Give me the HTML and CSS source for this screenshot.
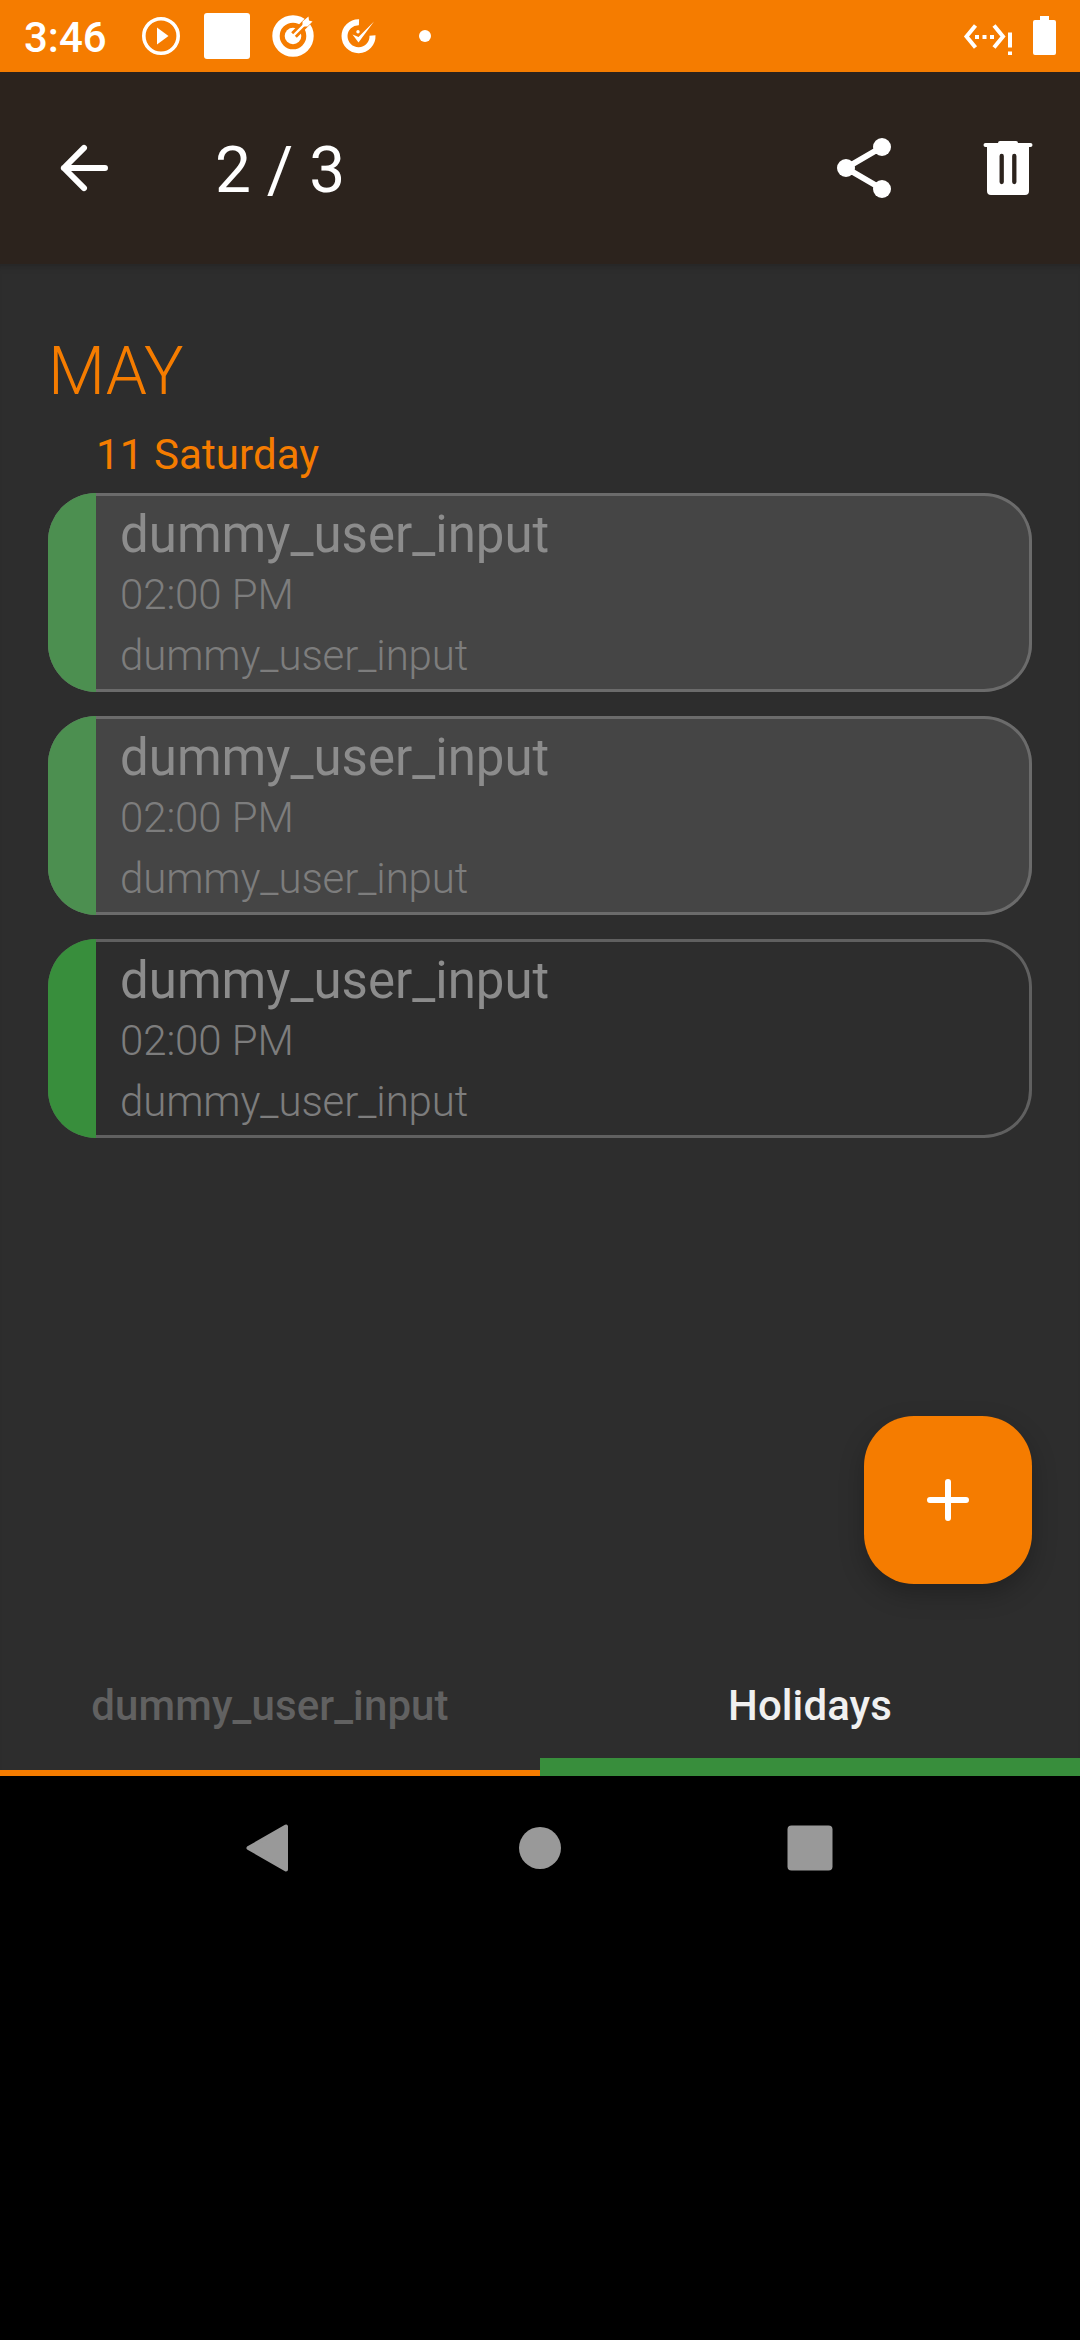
FILE: index.html
```html
<!DOCTYPE html>
<html lang="en">
<head>
<meta charset="utf-8">
<title>Holidays</title>
<link rel="stylesheet" href="styles.css">
</head>
<body>
<div class="screen">
  <header class="status">
    <span class="clock">3:46</span>
    <svg class="status-icons" width="306" height="72" viewBox="134 0 306 72">
      <circle cx="161" cy="36" r="17.2" fill="none" stroke="#fff" stroke-width="3.6"/>
      <path d="M157 27.5v17L168.500 36z" fill="#fff"/>
      <rect x="204" y="13" width="46" height="46" rx="3" fill="#fff"/>
      <circle cx="293" cy="36" r="17" fill="none" stroke="#fff" stroke-width="7.4"/>
      <circle cx="293" cy="36" r="8.300" fill="#fff"/>
      <path d="M294 35L308 21" stroke="#f57c00" stroke-width="8"/>
      <path d="M293 36L305 24" stroke="#fff" stroke-width="2.400"/>
      <path d="M302.500 26.500V21.500L308.500 16.500L309 20.500L312.500 21.500L307.500 26.500z" fill="#fff"/>
      <path d="M359 22.200A14 14 0 1 0 372.500 35.500" fill="none" stroke="#fff" stroke-width="6"/>
      <path d="M352.500 34.500L358.500 42.500L374 21.500L358.500 37z" fill="#fff"/>
      <circle cx="358" cy="31.800" r="1.700" fill="#fff"/>
      <circle cx="425" cy="36" r="6" fill="#fff"/>
    </svg>
    <svg class="system-icons" width="110" height="72" viewBox="954 0 110 72">
      <path d="M975.500 25.500L966.500 36.500L975.500 47.500M994 25.500L1003 36.500L994 47.500" fill="none" stroke="#fff" stroke-width="4"/>
      <path d="M975 35h4v4h-4zM982.500 35h4v4h-4zM990 35h4v4h-4zM1008 32.500h4v15h-4zM1008 51.500h4v3.500h-4z" fill="#fff"/>
      <path d="M1040 16h9v4h5a2 2 0 0 1 2 2v31a2 2 0 0 1-2 2h-19a2 2 0 0 1-2-2v-31a2 2 0 0 1 2-2h5z" fill="#fff"/>
    </svg>
  </header>
  <div class="toolbar">
    <svg width="72" height="72" viewBox="0 0 24 24" fill="none" stroke="#fff" stroke-width="2" stroke-linecap="round" stroke-linejoin="round"><path d="M19 12H5.300M12 5.300L5.300 12L12 18.700"/></svg>
    <h1 class="counter">2 / 3</h1>
    <svg class="share" width="72" height="72" viewBox="0 0 24 24" fill="#fff"><path d="M18 5L6 12L18 19" fill="none" stroke="#fff" stroke-width="2"/><circle cx="18" cy="5" r="3"/><circle cx="6" cy="12" r="3"/><circle cx="18" cy="19" r="3"/></svg>
    <svg width="72" height="72" viewBox="972 132 72 72"><path d="M1000 141h16q2 0 2 2h12.500a2 2 0 0 1 0 4H1029v44a4 4 0 0 1-4 4h-34a4 4 0 0 1-4-4v-44h-1.500a2 2 0 0 1 0-4H998q0-2 2-2z" fill="#fff"/><path d="M1001.700 156v26M1014.300 156v26" stroke="#2c231d" stroke-width="4.300" stroke-linecap="round"/></svg>
  </div>
  <main class="content">
    <h2 class="month">MAY</h2>
    <h3 class="day">11 Saturday</h3>
    <div class="events">
      <article class="event selected"><div class="title">dummy_user_input</div><div class="line">02:00 PM</div><div class="line">dummy_user_input</div></article>
      <article class="event selected"><div class="title">dummy_user_input</div><div class="line">02:00 PM</div><div class="line">dummy_user_input</div></article>
      <article class="event"><div class="title">dummy_user_input</div><div class="line">02:00 PM</div><div class="line">dummy_user_input</div></article>
    </div>
    <button class="fab" aria-label="Add"><svg width="72" height="72" viewBox="0 0 24 24" stroke="#fff" stroke-width="2" stroke-linecap="round"><path d="M12 6v12M6 12h12"/></svg></button>
    <nav class="tabs">
      <div class="tab">dummy_user_input</div>
      <div class="tab active">Holidays</div>
    </nav>
  </main>
  <footer class="navbar">
    <svg width="72" height="72" viewBox="0 0 72 72"><path d="M52 14.500V57.500L14.500 36z" fill="#999" stroke="#999" stroke-width="4" stroke-linejoin="round"/></svg>
    <svg width="72" height="72" viewBox="0 0 72 72"><circle cx="36" cy="36" r="21" fill="#999"/></svg>
    <svg width="72" height="72" viewBox="0 0 72 72"><rect x="13.500" y="13.500" width="45" height="45" rx="4" fill="#999"/></svg>
  </footer>
</div>
</body>
</html>
```
FILE: styles.css
```css
* { box-sizing: border-box; }
body { margin: 0; background: #000; font-family: Roboto, "Noto Sans", sans-serif; }
h1, h2, h3 { margin: 0; font-weight: 400; }
svg { display: block; flex: none; }
.screen { width: 1080px; height: 2340px; display: flex; flex-direction: column; background: #000; overflow: hidden; }
.status { height: 72px; flex: none; display: flex; background: #f57c00; padding: 0 16px 0 24px; }
.clock { width: 110px; font-size: 42px; font-weight: 500; line-height: 75px; color: #fff; }
.system-icons { margin-left: auto; }
.toolbar { height: 192px; flex: none; display: flex; align-items: center; padding: 0 36px 0 48px; background: #2c231d; color: #fff; }
.counter { margin-left: 95px; font-size: 64px; line-height: 76px; padding-top: 6px; flex: 1; }
.share { margin-right: 72px; }
.content { height: 1512px; flex: none; display: flex; flex-direction: column; background: #2d2d2d; padding-top: 66px; box-shadow: inset 0 8px 6px -6px #252525; }
.month { margin-left: 48px; font-size: 66px; font-weight: 300; line-height: 83px; color: #f57c00; }
.day { margin-left: 96px; margin-top: 14px; font-size: 42px; line-height: 56px; letter-spacing: .1px; color: #f57c00; }
.events { display: flex; flex-direction: column; gap: 24px; padding: 10px 48px 0; }
.event { height: 199px; box-shadow: inset 0 0 0 3px #606060; border-radius: 48px; padding: 11px 0 0 72px; position: relative; overflow: hidden; color: #7d7d7d; }
.event::before { content: ""; position: absolute; left: 0; top: 0; bottom: 0; width: 48px; background: #388e3c; }
.event.selected { background: #454545; box-shadow: inset 0 0 0 3px #6b6b6b; }
.event.selected::before { background: #4c8f50; }
.title { font-size: 51px; line-height: 62px; margin-bottom: -2px; color: #8c8c8c; }
.line { font-size: 42px; font-weight: 300; line-height: 61px; letter-spacing: -.1px; }
.fab { width: 168px; height: 168px; margin: 278px 48px 0 auto; flex: none; display: grid; place-items: center; border: 0; padding: 0; border-radius: 50px; background: #f57c00; box-shadow: 0 10px 24px rgba(0, 0, 0, .25); }
.tabs { margin-top: auto; height: 144px; flex: none; display: grid; grid-template-columns: 1fr 1fr; grid-template-rows: 144px; }
.tab { text-align: center; font-size: 42px; font-weight: 500; line-height: 100px; padding-top: 24px; letter-spacing: .1px; color: #616161; border-bottom: 6px solid #f57c00; }
.tab.active { color: #f0f0f0; border-bottom: 18px solid #388e3c; }
.navbar { height: 144px; flex: none; display: grid; grid-template-columns: 72px 72px 72px; gap: 198px; justify-content: center; align-items: center; }
```
